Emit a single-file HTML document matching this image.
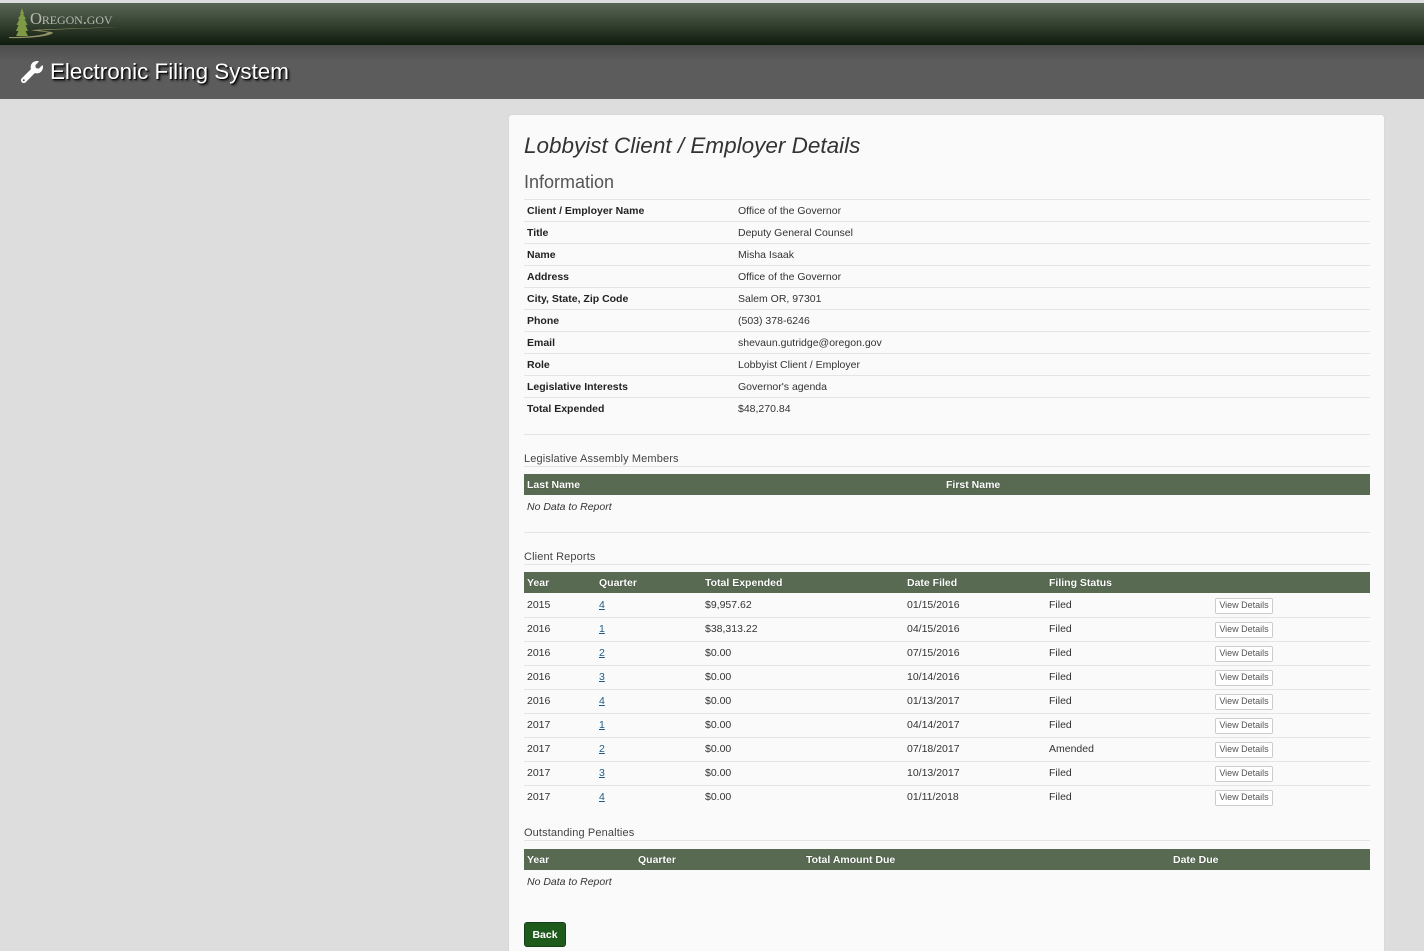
<!DOCTYPE html>
<html lang="en">
<head>
<meta charset="utf-8">
<title>Electronic Filing System</title>
<style>
html,body{margin:0;padding:0;width:1424px;height:951px;overflow:hidden;background:#ddd;font-family:"Liberation Sans",sans-serif;color:#333}
#wrap{position:relative;width:1424px;height:951px;overflow:hidden}
.a{position:absolute;white-space:nowrap}
#top{position:absolute;left:0;top:0;width:1424px;height:45px;border-top:3px solid #ddd;box-sizing:border-box;background:linear-gradient(#5a6655,#0f1c0d)}
#band{position:absolute;left:0;top:45px;width:1424px;height:54px;background:linear-gradient(#4c4c4c,#5c5c5c 30%,#5c5c5c)}
#title{left:50px;top:58px;font-size:22.4px;line-height:28px;color:#fff;text-shadow:1px 1px 1px #000,2px 2px 2px #222}
#panel{position:absolute;left:508px;top:114px;width:877px;height:860px;box-sizing:border-box;background:#fafafa;border:1px solid #d8d8d8;border-radius:4px}
h1{position:absolute;margin:0;left:524px;top:131px;font-size:22.5px;line-height:30px;font-weight:400;font-style:italic;color:#333;white-space:nowrap}
h2{position:absolute;margin:0;left:524px;top:171px;font-size:18px;line-height:22px;font-weight:400;color:#555;white-space:nowrap}
.l{position:absolute;left:524px;width:846px;height:1px;background:#e4e4e4}
.t{position:absolute;font-size:10.5px;line-height:14px;white-space:nowrap;color:#333}
.b{font-weight:700;color:#222}
.s{position:absolute;left:524px;font-size:11px;line-height:14px;white-space:nowrap;color:#444;letter-spacing:.13px}
.h{position:absolute;left:524px;width:846px;height:21px;background:#586b52}
.w{position:absolute;font-size:10.5px;line-height:14px;font-weight:700;color:#fff;white-space:nowrap;text-shadow:0 0 1px #2a3527}
.i{font-style:italic}
a{color:#1d5a85;text-decoration:underline}
.v{position:absolute;left:1215px;width:58px;height:16px;box-sizing:border-box;border:1px solid #ccc;border-radius:2px;background:#fff;font-size:9px;line-height:13px;text-align:center;color:#555;white-space:nowrap}
#back{position:absolute;left:524px;top:922px;width:42px;height:25px;box-sizing:border-box;background:#1f5a1d;border:1px solid #17401a;border-radius:3px;color:#fff;font-size:10.5px;font-weight:700;line-height:24px;text-align:center}
</style>
</head>
<body>
<div id="wrap">
<div id="top"></div>
<svg class="a" style="left:8px;top:6px" width="118" height="34" viewBox="0 0 118 34">
<path d="M14 2 L16 8 L15 8 L18 13 L16.500 13 L19.500 19 L17.500 19 L20 25 L17.500 25 L20 30 L8 30 L10.500 25 L8 25 L10.500 19 L8.500 19 L11.500 13 L10 13 L13 8 L12 8 Z" fill="#7f9a45"/>
<path d="M1 31 C16 31 34 30 40 26.500 C33 25 26 25 23 24 C40 23 80 22 115 21 C85 22.500 50 23 32 24.500 C38 25.500 45 25.500 45 27 C40 31 18 32.500 1 32 Z" fill="#a8a374" opacity=".85"/>
</svg>
<div class="a" style="left:30px;top:10px;font:400 16.6px/18px 'Liberation Serif',serif;font-variant:small-caps;color:#b5bab0;letter-spacing:-.1px">Oregon.gov</div>
<div id="band"></div>
<svg class="a" style="left:21px;top:61px" width="22" height="22" viewBox="0 0 512 512"><path fill="#fff" d="M507.73 109.1c-2.24-9.03-13.54-12.09-20.12-5.51l-74.36 74.36-67.88-11.31-11.31-67.88 74.36-74.36c6.62-6.62 3.43-17.9-5.66-20.16-47.38-11.74-99.55.91-136.58 37.93-39.64 39.64-50.55 97.1-34.05 147.2L18.74 402.76c-24.99 24.99-24.99 65.51 0 90.5 24.99 24.99 65.51 24.99 90.5 0l213.21-213.21c50.12 16.71 107.47 5.68 147.37-34.22 37.07-37.07 49.7-89.32 37.91-136.73zM64 472c-13.25 0-24-10.75-24-24 0-13.26 10.75-24 24-24s24 10.74 24 24c0 13.25-10.75 24-24 24z"/></svg>
<div class="a" id="title">Electronic Filing System</div>

<div id="panel"></div>
<h1>Lobbyist Client / Employer Details</h1>
<h2>Information</h2>

<div class="l" style="top:199px"></div>
<div class="t b" style="left:527px;top:204px">Client / Employer Name</div><div class="t" style="left:738px;top:204px">Office of the Governor</div>
<div class="l" style="top:221px"></div>
<div class="t b" style="left:527px;top:226px">Title</div><div class="t" style="left:738px;top:226px">Deputy General Counsel</div>
<div class="l" style="top:243px"></div>
<div class="t b" style="left:527px;top:248px">Name</div><div class="t" style="left:738px;top:248px">Misha Isaak</div>
<div class="l" style="top:265px"></div>
<div class="t b" style="left:527px;top:270px">Address</div><div class="t" style="left:738px;top:270px">Office of the Governor</div>
<div class="l" style="top:287px"></div>
<div class="t b" style="left:527px;top:292px">City, State, Zip Code</div><div class="t" style="left:738px;top:292px">Salem OR, 97301</div>
<div class="l" style="top:309px"></div>
<div class="t b" style="left:527px;top:314px">Phone</div><div class="t" style="left:738px;top:314px">(503) 378-6246</div>
<div class="l" style="top:331px"></div>
<div class="t b" style="left:527px;top:336px">Email</div><div class="t" style="left:738px;top:336px">shevaun.gutridge@oregon.gov</div>
<div class="l" style="top:353px"></div>
<div class="t b" style="left:527px;top:358px">Role</div><div class="t" style="left:738px;top:358px">Lobbyist Client / Employer</div>
<div class="l" style="top:375px"></div>
<div class="t b" style="left:527px;top:380px">Legislative Interests</div><div class="t" style="left:738px;top:380px">Governor's agenda</div>
<div class="l" style="top:397px"></div>
<div class="t b" style="left:527px;top:402px">Total Expended</div><div class="t" style="left:738px;top:402px">$48,270.84</div>

<div class="l" style="top:434px"></div>
<div class="s" style="top:452px">Legislative Assembly Members</div>
<div class="l" style="top:466px"></div>
<div class="h" style="top:474px"></div>
<div class="w" style="left:527px;top:478px">Last Name</div>
<div class="w" style="left:946px;top:478px">First Name</div>
<div class="t i" style="left:527px;top:500px">No Data to Report</div>

<div class="l" style="top:532px"></div>
<div class="s" style="top:550px">Client Reports</div>
<div class="l" style="top:564px"></div>
<div class="h" style="top:572px"></div>
<div class="w" style="left:527px;top:576px">Year</div>
<div class="w" style="left:599px;top:576px">Quarter</div>
<div class="w" style="left:705px;top:576px">Total Expended</div>
<div class="w" style="left:907px;top:576px">Date Filed</div>
<div class="w" style="left:1049px;top:576px">Filing Status</div>

<div class="t" style="left:527px;top:598px">2015</div><div class="t" style="left:599px;top:598px"><a>4</a></div><div class="t" style="left:705px;top:598px">$9,957.62</div><div class="t" style="left:907px;top:598px">01/15/2016</div><div class="t" style="left:1049px;top:598px">Filed</div><div class="v" style="top:598px">View Details</div>
<div class="l" style="top:617px"></div>
<div class="t" style="left:527px;top:622px">2016</div><div class="t" style="left:599px;top:622px"><a>1</a></div><div class="t" style="left:705px;top:622px">$38,313.22</div><div class="t" style="left:907px;top:622px">04/15/2016</div><div class="t" style="left:1049px;top:622px">Filed</div><div class="v" style="top:622px">View Details</div>
<div class="l" style="top:641px"></div>
<div class="t" style="left:527px;top:646px">2016</div><div class="t" style="left:599px;top:646px"><a>2</a></div><div class="t" style="left:705px;top:646px">$0.00</div><div class="t" style="left:907px;top:646px">07/15/2016</div><div class="t" style="left:1049px;top:646px">Filed</div><div class="v" style="top:646px">View Details</div>
<div class="l" style="top:665px"></div>
<div class="t" style="left:527px;top:670px">2016</div><div class="t" style="left:599px;top:670px"><a>3</a></div><div class="t" style="left:705px;top:670px">$0.00</div><div class="t" style="left:907px;top:670px">10/14/2016</div><div class="t" style="left:1049px;top:670px">Filed</div><div class="v" style="top:670px">View Details</div>
<div class="l" style="top:689px"></div>
<div class="t" style="left:527px;top:694px">2016</div><div class="t" style="left:599px;top:694px"><a>4</a></div><div class="t" style="left:705px;top:694px">$0.00</div><div class="t" style="left:907px;top:694px">01/13/2017</div><div class="t" style="left:1049px;top:694px">Filed</div><div class="v" style="top:694px">View Details</div>
<div class="l" style="top:713px"></div>
<div class="t" style="left:527px;top:718px">2017</div><div class="t" style="left:599px;top:718px"><a>1</a></div><div class="t" style="left:705px;top:718px">$0.00</div><div class="t" style="left:907px;top:718px">04/14/2017</div><div class="t" style="left:1049px;top:718px">Filed</div><div class="v" style="top:718px">View Details</div>
<div class="l" style="top:737px"></div>
<div class="t" style="left:527px;top:742px">2017</div><div class="t" style="left:599px;top:742px"><a>2</a></div><div class="t" style="left:705px;top:742px">$0.00</div><div class="t" style="left:907px;top:742px">07/18/2017</div><div class="t" style="left:1049px;top:742px">Amended</div><div class="v" style="top:742px">View Details</div>
<div class="l" style="top:761px"></div>
<div class="t" style="left:527px;top:766px">2017</div><div class="t" style="left:599px;top:766px"><a>3</a></div><div class="t" style="left:705px;top:766px">$0.00</div><div class="t" style="left:907px;top:766px">10/13/2017</div><div class="t" style="left:1049px;top:766px">Filed</div><div class="v" style="top:766px">View Details</div>
<div class="l" style="top:785px"></div>
<div class="t" style="left:527px;top:790px">2017</div><div class="t" style="left:599px;top:790px"><a>4</a></div><div class="t" style="left:705px;top:790px">$0.00</div><div class="t" style="left:907px;top:790px">01/11/2018</div><div class="t" style="left:1049px;top:790px">Filed</div><div class="v" style="top:790px">View Details</div>

<div class="s" style="top:826px">Outstanding Penalties</div>
<div class="l" style="top:840px"></div>
<div class="h" style="top:849px"></div>
<div class="w" style="left:527px;top:853px">Year</div>
<div class="w" style="left:638px;top:853px">Quarter</div>
<div class="w" style="left:806px;top:853px">Total Amount Due</div>
<div class="w" style="left:1173px;top:853px">Date Due</div>
<div class="t i" style="left:527px;top:875px">No Data to Report</div>

<div id="back">Back</div>
</div>
</body>
</html>
